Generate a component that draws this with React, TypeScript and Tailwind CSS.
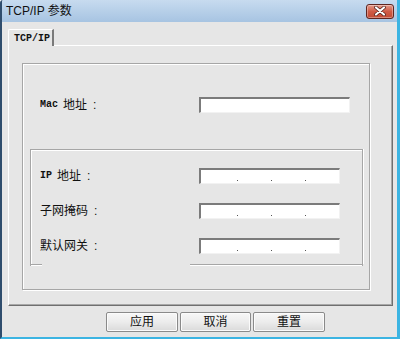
import React from "react";

const CJK = "font-['Liberation_Sans','Noto_Sans_CJK_SC',sans-serif]";
const MONO = "font-['Liberation_Mono','Noto_Sans_CJK_SC',monospace]";

// sunken text box like a classic win32 edit control
const EditBox = ({ width, ip }: { width: string; ip?: boolean }) => (
  <div
    className={`${width} h-[16px] bg-white border-t-2 border-l-2 border-t-[#7b7b7b] border-l-[#7b7b7b] border-r border-b border-r-[#f2f2f2] border-b-[#f2f2f2] flex items-end`}
  >
    {ip && (
      <div className="flex w-full pb-[2px]">
        <span className="w-[36px]" />
        <span className="w-[1px] h-[1px] bg-[#555]" />
        <span className="w-[33px]" />
        <span className="w-[1px] h-[1px] bg-[#555]" />
        <span className="w-[33px]" />
        <span className="w-[1px] h-[1px] bg-[#555]" />
      </div>
    )}
  </div>
);

const FieldLabel = ({ latin, cjk }: { latin?: string; cjk: string }) => (
  <div className="flex items-center text-[12px] text-[#111] leading-none">
    {latin && <span className={`${MONO} text-[10px] font-bold mr-[5px]`}>{latin}</span>}
    <span className={CJK}>{cjk}</span>
    <span className={`${CJK} ml-[6px]`}>:</span>
  </div>
);

const IpRow = ({ latin, cjk }: { latin?: string; cjk: string }) => (
  <div className="flex items-center h-[16px]">
    <div className="w-[168px] pl-[9px]">
      <FieldLabel latin={latin} cjk={cjk} />
    </div>
    <EditBox width="w-[141px]" ip />
  </div>
);

const DlgButton = ({ label, w }: { label: string; w: string }) => (
  <button
    className={`${w} h-[20px] rounded-[2px] border border-[#8a8a8a] bg-gradient-to-b from-[#f7f7f7] via-[#ececec] to-[#dadada] shadow-[inset_0_0_0_1px_#fbfbfb] text-[12px] text-[#111] ${CJK} leading-none`}
  >
    {label}
  </button>
);

export default function App() {
  return (
    <div className="w-[400px] h-[339px] flex flex-col bg-[#e6e6e6] border-l-2 border-l-[#2f4d6d] border-r-[3px] border-r-[#3cb4e2] border-b-2 border-b-[#3cb4e2] rounded-tl-[3px] overflow-hidden">
      {/* title bar */}
      <div className="h-[22px] flex items-center justify-between pl-[4px] pr-[3px] bg-gradient-to-b from-[#c7dbef] to-[#a7c4e2]">
        <span className={`${CJK} text-[12px] text-[#111]`}>TCP/IP 参数</span>
        <div className="w-[28px] h-[15px] rounded-[3px] border border-[#5f2520] bg-gradient-to-b from-[#e49a8a] via-[#cf5a45] to-[#c24a33] flex items-center justify-center shadow-[inset_0_0_0_1px_rgba(255,255,255,0.35)]">
          <svg width="12" height="10" viewBox="0 0 12 10">
            <path d="M2 1.5 L10 8.5 M10 1.5 L2 8.5" stroke="#4a1a16" strokeWidth="3.6" strokeLinecap="round" />
            <path d="M2 1.5 L10 8.5 M10 1.5 L2 8.5" stroke="#fff" strokeWidth="2.2" strokeLinecap="round" />
          </svg>
        </div>
      </div>

      {/* body */}
      <div className="flex flex-col pl-[6px] pt-[7px]">
        {/* tab header */}
        <div className="flex">
          <div className={`w-[46px] h-[17px] border-t border-l border-t-white border-l-white border-r-2 border-r-[#7a7a7a] rounded-tl-[2px] bg-[#e6e6e6] flex items-center pl-[5px] ${MONO} text-[10px] font-bold text-[#111] -mb-px relative`}>
            TCP/IP
          </div>
        </div>

        {/* tab panel */}
        <div className="w-[385px] h-[261px] border-t border-l border-t-white border-l-white border-r border-b border-r-[#6f6f6f] border-b-[#6f6f6f] shadow-[inset_-1px_-1px_0_#a8a8a8] pl-[13px] pt-[17px]">
          {/* outer group */}
          <div className="w-[348px] h-[227px] border border-[#a6a6a6] shadow-[inset_1px_1px_0_#fff,1px_1px_0_#fff] flex flex-col pt-[33px]">
            <div className="flex items-center h-[16px]">
              <div className="w-[176px] pl-[17px]">
                <FieldLabel latin="Mac" cjk="地址" />
              </div>
              <EditBox width="w-[151px]" />
            </div>

            {/* ip group */}
            <div className="ml-[7px] mt-[36px] w-[333px] h-[117px] flex flex-col">
              <div className="flex-1 border-t border-x border-[#a6a6a6] shadow-[inset_1px_1px_0_#fff,1px_0_0_#fff] flex flex-col pt-[18px] gap-[19px]">
                <IpRow latin="IP" cjk="地址" />
                <IpRow cjk="子网掩码" />
                <IpRow cjk="默认网关" />
              </div>
              <div className="flex h-[2px]">
                <div className="w-[12px] border-t border-[#a6a6a6] border-l border-l-[#a6a6a6] shadow-[inset_0_1px_0_#fff]" />
                <div className="w-[148px]" />
                <div className="flex-1 border-t border-[#a6a6a6] border-r border-r-[#a6a6a6] shadow-[inset_0_1px_0_#fff]" />
              </div>
            </div>
          </div>
        </div>

        {/* buttons */}
        <div className="flex gap-[2px] pl-[98px] pt-[6px]">
          <DlgButton label="应用" w="w-[72px]" />
          <DlgButton label="取消" w="w-[71px]" />
          <DlgButton label="重置" w="w-[72px]" />
        </div>
      </div>
    </div>
  );
}
